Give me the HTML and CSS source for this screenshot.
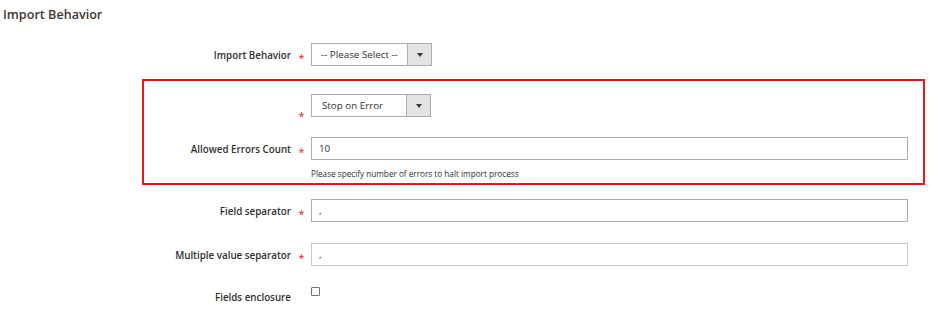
FILE: index.html
```html
<!DOCTYPE html>
<html lang="en">
<head>
  <meta charset="UTF-8">
  <title>Import Behavior</title>
  <link rel="stylesheet" href="styles.css">
</head>
<body>

  <div class="section">
    <div class="section-title">Import Behavior</div>

    <!-- behavior -->
    <div class="field first">
      <label class="field-label">Import Behavior</label>
      <span class="req">*</span>
      <div class="control">
        <div class="select short">
          <span class="select-value">-- Please Select --</span>
          <span class="select-arrow"></span>
        </div>
      </div>
    </div>

    <!-- highlighted part -->
    <div class="highlight">
      <div class="field">
        <label class="field-label"></label>
        <span class="req low">*</span>
        <div class="control">
          <div class="select">
            <span class="select-value">Stop on Error</span>
            <span class="select-arrow"></span>
          </div>
        </div>
      </div>
      <div class="field">
        <label class="field-label">Allowed Errors Count</label>
        <span class="req">*</span>
        <div class="control">
          <input class="text-input" type="text" value="10">
          <div class="note">Please specify number of errors to halt import process</div>
        </div>
      </div>
    </div>

    <div class="field">
      <label class="field-label">Field separator</label>
      <span class="req">*</span>
      <div class="control">
        <input class="text-input" type="text" value=",">
      </div>
    </div>

    <div class="field">
      <label class="field-label">Multiple value separator</label>
      <span class="req">*</span>
      <div class="control">
        <input class="text-input light" type="text" value=",">
      </div>
    </div>

    <div class="field checkbox-row">
      <label class="field-label">Fields enclosure</label>
      <span class="req"></span>
      <div class="control">
        <span class="checkbox"></span>
      </div>
    </div>
  </div>

</body>
</html>
```

FILE: styles.css
```css
body {
  margin: 0;
  font-family: "Open Sans", "Liberation Sans", sans-serif;
  color: #303030;
  background: #fff;
}
.section {
  padding: 5px 0 0 3px;
  --label: 288px;
}
.section-title {
  font-size: 12.6px;
  font-weight: 600;
  color: #41362f;
  line-height: 20px;
}
.field {
  display: grid;
  grid-template-columns: var(--label) 20px 597px;
  align-items: start;
  margin-bottom: 21px;
}
.field.first {
  margin-top: 18px;
  margin-bottom: 13px;
}
.field-label {
  font-size: 9.8px;
  font-weight: 600;
  text-align: right;
  line-height: 21px;
  padding-top: 2px;
}
.req {
  color: #e22626;
  font-size: 11.5px;
  line-height: 15px;
  height: 15px;
  text-align: center;
  padding-top: 7px;
  padding-left: 1px;
}
.req.low {
  padding-top: 14px;
  margin-bottom: -7px;
}
.control {
  font-size: 9.8px;
}

/* red frame */
.highlight {
  margin-left: 139px;
  width: 779px;
  border: 2px solid #e31b1b;
  padding: 13px 0 2px;
  margin-bottom: 14px;
  --label: 147px;
}
.highlight .field {
  margin-bottom: 20px;
}
.highlight .field:last-child {
  margin-bottom: 0;
}

.select {
  display: flex;
  width: 120px;
  height: 23px;
  box-sizing: border-box;
  border: 1px solid #adadad;
  background: #fff;
}
.select.short {
  width: 121px;
}
.select-value {
  flex: 1;
  padding-left: 10px;
  line-height: 21px;
  color: #303030;
}
.select.short .select-value {
  padding-left: 9px;
}
.select-arrow {
  width: 23px;
  border-left: 1px solid #adadad;
  background: #e3e3e3;
  display: flex;
  align-items: center;
  justify-content: center;
}
.select-arrow::after {
  content: "";
  border-left: 3px solid transparent;
  border-right: 3px solid transparent;
  border-top: 4px solid #41362f;
}

.text-input {
  display: block;
  width: 597px;
  height: 23px;
  box-sizing: border-box;
  border: 1px solid #adadad;
  padding: 0 7px;
  font-family: "Open Sans", "Liberation Sans", sans-serif;
  font-size: 9.8px;
  color: #303030;
  outline: none;
}
.text-input.light {
  border-color: #c8c8c8;
}
.note {
  font-size: 8.2px;
  line-height: 14px;
  margin-top: 7px;
  color: #303030;
}

.checkbox-row {
  margin-bottom: 0;
}
.checkbox-row .field-label {
  padding-top: 0;
}
.checkbox {
  display: block;
  width: 9px;
  height: 9px;
  border: 1px solid #707070;
  border-radius: 1px;
  box-sizing: border-box;
}
```
